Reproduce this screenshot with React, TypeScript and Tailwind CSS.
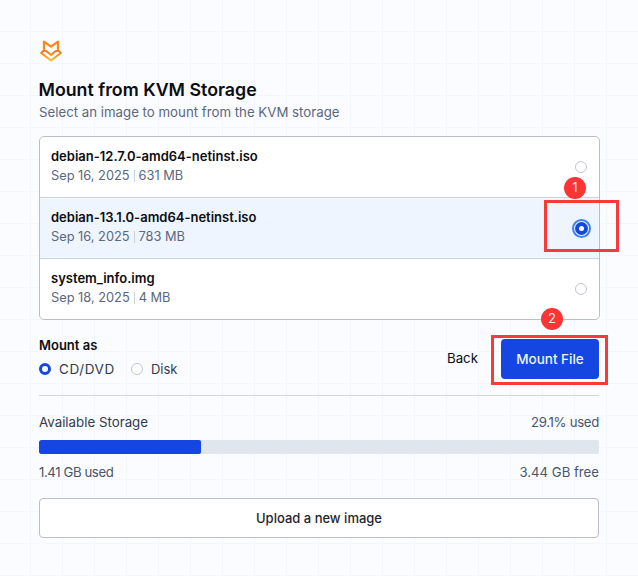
const FILES = [
    { name: 'debian-12.7.0-amd64-netinst.iso', date: 'Sep 16, 2025', size: '631 MB', selected: false },
    { name: 'debian-13.1.0-amd64-netinst.iso', date: 'Sep 16, 2025', size: '783 MB', selected: true },
    { name: 'system_info.img', date: 'Sep 18, 2025', size: '4 MB', selected: false },
];

function Logo() {
    return (
        <svg width="24" height="24" viewBox="0 0 24 24" fill="none" className="block">
            <defs>
                <linearGradient id="fox" x1="0" y1="0" x2="0" y2="1">
                    <stop offset="0%" stopColor="#f97316" />
                    <stop offset="100%" stopColor="#fbbf24" />
                </linearGradient>
            </defs>
            <path d="M5 10 L5 2.6 L12 7.6 L19 2.6 L19 10" stroke="#f98a1b" strokeWidth="2.3" strokeLinejoin="round" strokeLinecap="round" />
            <path d="M8.5 13 L12 16 L15.5 13 C17 11.5 20 11 21.8 14 L12 21.5 L2.2 14 C4 11 7 11.5 8.5 13 Z" stroke="url(#fox)" strokeWidth="2.1" strokeLinejoin="round" />
        </svg>
    );
}

function Badge({ n, className }: { n: number; className: string }) {
    return (
        <div className={`absolute w-[22px] h-[22px] rounded-full bg-[#fb3535] text-[#ffe9e9] text-[13px] flex items-center justify-center ${className}`}>
            {n}
        </div>
    );
}

export default function App() {
    return (
        <div
            className="relative w-[638px] h-[576px] overflow-hidden bg-[#fbfcff] bg-[linear-gradient(to_right,#f3f6fc_1px,transparent_1px),linear-gradient(to_bottom,#f3f6fc_1px,transparent_1px)] bg-[size:32px_32px] bg-[position:30px_31px] font-['Inter',sans-serif] text-[#0b0d12]"
        >
            <div className="flex flex-col pl-[39px] pt-[39px] w-[599px]">
                <Logo />
                <h1 className="mt-[15px] -ml-[0.5px] text-[17.8px] leading-[24px] font-semibold">Mount from KVM Storage</h1>
                <p className="text-[13.25px] leading-[20px] text-[#5b677d]">Select an image to mount from the KVM storage</p>

                <div className="mt-[14px] mr-[-1px] rounded-[5px] border border-[#b9bec9] bg-white overflow-hidden">
                    {FILES.map((file, i) => (
                        <div
                            key={file.name}
                            className={`flex items-center justify-between pl-[11px] pr-3 ${i > 0 ? 'h-[61px] border-t border-[#cfd4de]' : 'h-[60px]'} ${file.selected ? 'bg-[#eff5fe]' : ''}`}
                        >
                            <div className="flex flex-col pb-[2px]">
                                <span className="text-[13px] leading-[19px] font-semibold">{file.name}</span>
                                <span className="flex items-center text-[12.8px] leading-[19px] text-[#5b677d]">
                                    {file.date}
                                    <span className="mx-[4px] h-3 w-px bg-[#cbd2dd]" />
                                    {file.size}
                                </span>
                            </div>
                            {file.selected ? (
                                <div className="w-[19px] h-[19px] mr-[-3.5px] rounded-full border-2 border-[#3b82f6] flex items-center justify-center">
                                    <div className="w-[13px] h-[13px] rounded-full bg-[#1546e2] flex items-center justify-center">
                                        <div className="w-[5px] h-[5px] rounded-full bg-white" />
                                    </div>
                                </div>
                            ) : (
                                <div className="w-3 h-3 rounded-full bg-white border border-[#c2c6cd]" />
                            )}
                        </div>
                    ))}
                </div>

                <div className="mt-[15px] flex items-center justify-between">
                    <div className="flex flex-col">
                        <span className="text-[13px] leading-[20px] font-semibold">Mount as</span>
                        <div className="mt-[4px] flex items-center gap-[16px] text-[13.5px] leading-[20px] text-[#323a4b]">
                            <label className="flex items-center gap-[8px] tracking-[0.6px]">
                                <span className="w-3 h-3 rounded-full border-[3.5px] border-[#1546e2] bg-white" />
                                CD/DVD
                            </label>
                            <label className="flex items-center gap-[8px] text-[13px]">
                                <span className="w-3 h-3 rounded-full border border-[#c2c6cd] bg-white" />
                                Disk
                            </label>
                        </div>
                    </div>
                    <div className="mt-[4px] flex items-center gap-[23px]">
                        <span className="text-[13.3px]">Back</span>
                        <button className="w-[98px] h-10 rounded-[4px] bg-[#1546e2] text-[#eef3ff] text-[13.5px] font-medium">Mount File</button>
                    </div>
                </div>

                <div className="mt-[16px] h-px bg-[#d3d6dc]" />

                <div className="mt-[16px] flex justify-between text-[13.3px] leading-[20px]">
                    <span className="text-[#323a4b]">Available Storage</span>
                    <span className="text-[#4a5568] text-[13.2px] tracking-[-0.3px]">29.1% used</span>
                </div>
                <div className="mt-[8px] h-[14px] rounded-[2px] bg-[#e0e6ee] overflow-hidden">
                    <div className="h-full bg-[#1546e2] rounded-[2px]" style={{ width: '28.93%' }} />
                </div>
                <div className="mt-[8px] flex justify-between text-[13.2px] leading-[20px] text-[#4a5568]">
                    <span className="tracking-[-0.4px]">1.41 GB used</span>
                    <span>3.44 GB free</span>
                </div>

                <button className="mt-[16px] h-10 pt-[1px] rounded-[4px] border border-[#b9bec9] bg-white text-[13px] text-[#1f2430] font-medium">Upload a new image</button>
            </div>

            {/* Red annotations drawn over the screenshot */}
            <div className="absolute left-[544px] top-[200px] w-[75px] h-[52px] border-[3px] border-[#f93a3a]" />
            <Badge n={1} className="left-[564px] top-[177px]" />
            <div className="absolute left-[491px] top-[335px] w-[117px] h-[50px] border-[3px] border-[#f93a3a]" />
            <Badge n={2} className="left-[541px] top-[308px]" />
        </div>
    );
}
